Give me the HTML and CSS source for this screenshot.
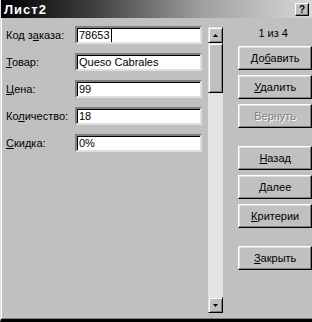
FILE: index.html
```html
<!DOCTYPE html>
<html lang="ru">
<head>
  <meta charset="UTF-8">
  <title>Лист2</title>
  <link rel="stylesheet" href="styles.css">
</head>
<body>

  <div class="window">
    <div class="titlebar">
      <span class="title">Лист2</span>
      <span class="help">?</span>
    </div>

    <div class="content">
      <div class="fields">
        <div class="row"><span class="label">Код з<u>а</u>каза:</span><div class="field">78653<span class="caret"></span></div></div>
        <div class="row"><span class="label"><u>Т</u>овар:</span><div class="field">Queso Cabrales</div></div>
        <div class="row"><span class="label"><u>Ц</u>ена:</span><div class="field">99</div></div>
        <div class="row"><span class="label">Ко<u>л</u>ичество:</span><div class="field">18</div></div>
        <div class="row"><span class="label"><u>С</u>кидка:</span><div class="field">0%</div></div>
      </div>

      <div class="scrollbar">
        <div class="sb-btn">
          <svg width="5" height="3" viewBox="0 0 5 3"><polygon points="2.5,0 5,3 0,3" fill="#000"/></svg>
        </div>
        <div class="thumb"></div>
        <div class="track"></div>
        <div class="sb-btn">
          <svg width="5" height="3" viewBox="0 0 5 3"><polygon points="0,0 5,0 2.5,3" fill="#000"/></svg>
        </div>
      </div>

      <div class="actions">
        <div class="counter">1 из 4</div>
        <button>До<u>б</u>авить</button>
        <button><u>У</u>далить</button>
        <button class="disabled">Вернуть</button>
        <button class="group"><u>Н</u>азад</button>
        <button><u>Д</u>алее</button>
        <button><u>К</u>ритерии</button>
        <button class="group"><u>З</u>акрыть</button>
      </div>
    </div>
  </div>

</body>
</html>
```

FILE: styles.css
```css
body {
  margin: 0;
  width: 312px;
  height: 322px;
  overflow: hidden;
  background-color: #c0c0c0;
  font-family: "Liberation Sans", Arial, sans-serif;
  font-size: 11px;
  color: #000;
}
.window {
  height: 322px;
  box-sizing: border-box;
  border-left: 1px solid #dfdfdf;
  border-bottom: 3px solid #000;
  display: flex;
  flex-direction: column;
}
.titlebar {
  height: 18px;
  flex: none;
  background: linear-gradient(to right, #000 0%, #404040 30%, #a0a0a0 65%, #d8d8d8 100%);
  display: flex;
  align-items: center;
  justify-content: space-between;
  padding: 0 3px 0 3px;
}
.title {
  color: #fff;
  font-weight: bold;
  font-size: 13px;
  letter-spacing: 1px;
}
.help {
  width: 12px;
  height: 11px;
  background-color: #c0c0c0;
  border: 1px solid;
  border-color: #fff #000 #000 #fff;
  box-shadow: inset -1px -1px #808080;
  font-weight: bold;
  font-size: 10px;
  line-height: 11px;
  text-align: center;
}
.content {
  flex: 1;
  display: flex;
  padding: 8px 0 0 4px;
  border-left: 1px solid #fff;
  border-bottom: 1px solid #808080;
}
.fields {
  display: flex;
  flex-direction: column;
  gap: 9px;
}
.row {
  display: flex;
  align-items: center;
  height: 18px;
}
.label {
  width: 69px;
}
.field {
  width: 121px;
  height: 14px;
  background-color: #fff;
  border: 2px solid;
  border-color: #808080 #dfdfdf #dfdfdf #808080;
  box-shadow: inset 1px 1px #000;
  padding-left: 2px;
  line-height: 14px;
  display: flex;
  align-items: center;
}
.caret {
  width: 1px;
  height: 13px;
  background-color: #000;
  margin-left: 1px;
}
.scrollbar {
  width: 16px;
  height: 286px;
  margin: 1px 0 0 6px;
  display: flex;
  flex-direction: column;
}
.sb-btn, .thumb {
  box-sizing: border-box;
  background-color: #c0c0c0;
  border: 1px solid;
  border-color: #dfdfdf #000 #000 #dfdfdf;
  box-shadow: inset 1px 1px #fff, inset -1px -1px #808080;
}
.sb-btn {
  height: 16px;
  display: flex;
  align-items: center;
  justify-content: center;
}
.thumb {
  height: 50px;
}
.track {
  flex: 1;
  background-color: #e4e4e4;
}
.actions {
  margin-left: 15px;
  width: 77px;
  display: flex;
  flex-direction: column;
}
.counter {
  height: 14px;
  line-height: 14px;
  text-align: center;
  margin-bottom: 6px;
  padding-right: 4px;
}
.actions button {
  height: 24px;
  margin-bottom: 5px;
  font-family: inherit;
  font-size: 11px;
  color: #000;
  background-color: #c0c0c0;
  border: 1px solid;
  border-color: #fff #000 #000 #fff;
  box-shadow: inset -1px -1px #808080, inset 1px 1px #dfdfdf;
  padding: 0;
}
.actions button.group {
  margin-top: 13px;
}
.actions button.disabled {
  color: #808080;
  text-shadow: 1px 1px #fff;
}
```
